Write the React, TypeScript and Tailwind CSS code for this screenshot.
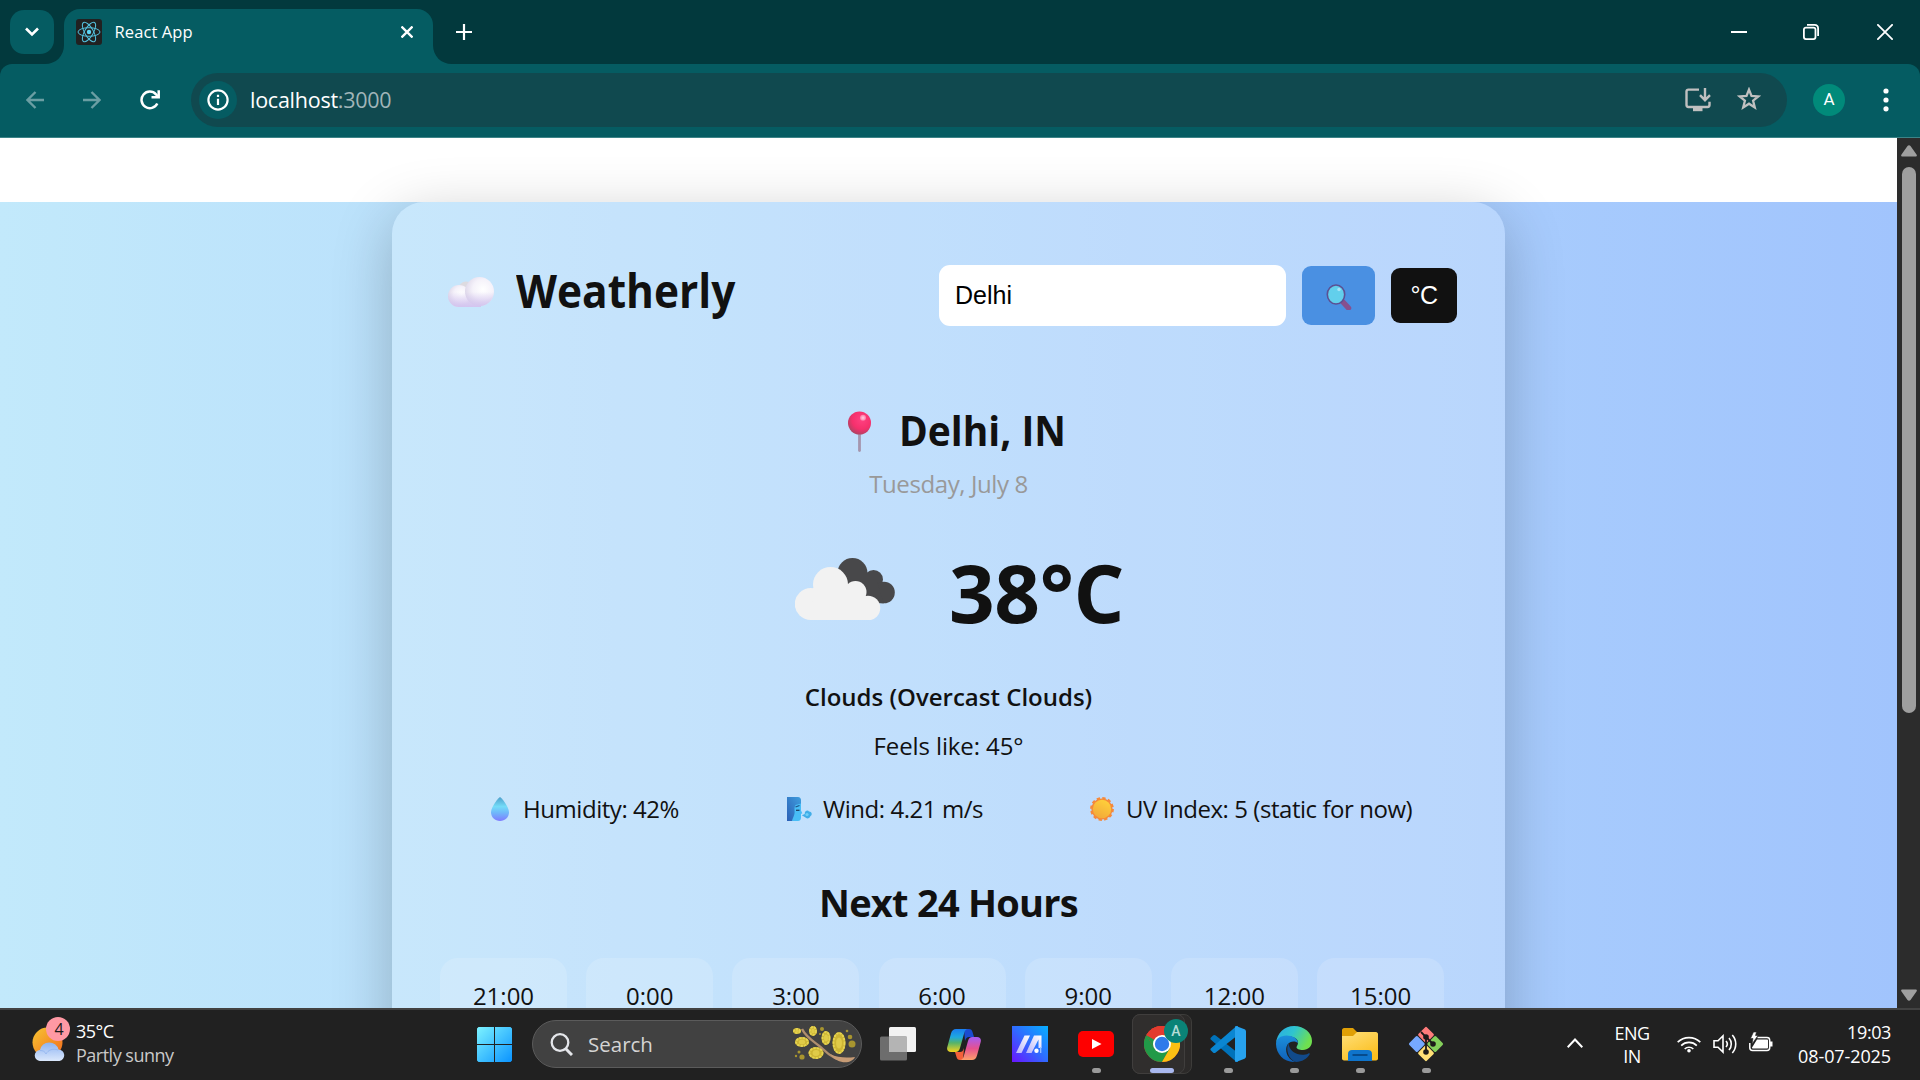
import React from "react";

const hours = ["21:00", "0:00", "3:00", "6:00", "9:00", "12:00", "15:00"];

function ReactLogo() {
  return (
    <svg viewBox="0 0 26 26" className="size-[26px]">
      <rect width="26" height="26" rx="3" fill="#212121" />
      <g fill="none" stroke="#53bfdc" strokeWidth="1">
        <ellipse cx="13" cy="13" rx="11" ry="4.3" />
        <ellipse cx="13" cy="13" rx="11" ry="4.3" transform="rotate(60 13 13)" />
        <ellipse cx="13" cy="13" rx="11" ry="4.3" transform="rotate(120 13 13)" />
      </g>
      <circle cx="13" cy="13" r="2.2" fill="#5fd4f3" />
    </svg>
  );
}

function TabStrip() {
  return (
    <div className="flex h-16 bg-[#02393d]">
      <div className="ml-[10px] mt-[10px] grid size-11 place-items-center rounded-[14px] bg-[#055c62]">
        <svg viewBox="0 0 14 10" className="h-[10px] w-[14px]" fill="none" stroke="#fff" strokeWidth="2.6">
          <path d="M1 1.5 7 7.5 13 1.5" />
        </svg>
      </div>
      <div className="flex w-[10px] items-end justify-end">
        <svg viewBox="0 0 19 19" className="size-[19px] shrink-0" fill="#055c62">
          <path d="M19 0v19H0C11 19 19 11 19 0z" />
        </svg>
      </div>
      <div className="mt-[9px] flex h-[55px] w-[369px] items-center rounded-t-[16px] bg-[#055c62] pb-[9px] pl-3">
        <ReactLogo />
        <span className="ml-[12.5px] text-[16.5px] leading-6 tracking-[0.1px] text-white">React App</span>
        <svg viewBox="0 0 12 12" className="ml-auto mr-[20px] size-3" stroke="#fff" strokeWidth="2.3">
          <path d="M.5.5l11 11M11.5.5l-11 11" />
        </svg>
      </div>
      <div className="flex items-end">
        <svg viewBox="0 0 19 19" className="size-[19px]" fill="#055c62">
          <path d="M0 0v19h19C8 19 0 11 0 0z" />
        </svg>
      </div>
      <svg viewBox="0 0 16 16" className="ml-[4px] mt-6 size-4" stroke="#fff" strokeWidth="2.2">
        <path d="M8 0v16M0 8h16" />
      </svg>
      <div className="ml-auto mr-[27px] flex h-16 items-center gap-[56px]">
        <svg viewBox="0 0 16 16" className="size-4" stroke="#fff" strokeWidth="2">
          <path d="M0 8h16" />
        </svg>
        <svg viewBox="0 0 16 16" className="size-4" fill="none" stroke="#fff" strokeWidth="1.8">
          <rect x=".9" y="3.6" width="11.6" height="11.5" rx="2" />
          <path d="M4 .9h7.5c2.200 0 3.600 1.500 3.600 3.700V12" />
        </svg>
        <svg viewBox="0 0 16 16" className="ml-[2px] size-4" stroke="#fff" strokeWidth="1.8">
          <path d="M.3.3l15.400 15.400M15.700.3L.3 15.700" />
        </svg>
      </div>
    </div>
  );
}

function Toolbar() {
  return (
    <div className="bg-[#02393d]">
      <div className="flex h-[74px] items-start rounded-t-[12px] border-b border-[#3c8488] bg-[#055c62] pt-[9px]">
        <div className="flex h-[54px] w-[191px] items-center pl-[26px]">
          <svg viewBox="0 0 18 18" className="size-[18px]" fill="none" stroke="#6b9ea3" strokeWidth="2.4">
            <path d="M18.500 9H1.500M9.500 1 1.500 9l8 8" />
          </svg>
          <svg viewBox="0 0 18 18" className="ml-[39px] size-[18px]" fill="none" stroke="#6b9ea3" strokeWidth="2.4">
            <path d="M-.5 9h17M8.500 1l8 8-8 8" />
          </svg>
          <svg viewBox="0 0 20 20" className="ml-[39px] size-5" fill="none" stroke="#fff" strokeWidth="2.500">
            <path d="M17.300 13.500A8.300 8.300 0 1 1 16 4.300L18 6.500" />
            <path d="M18.700.2v7.100h-7.200" />
          </svg>
        </div>
        <div className="flex h-[54px] w-[1596px] items-center rounded-full bg-[#10494f] pl-2">
          <div className="grid size-[38px] place-items-center rounded-full bg-[#055c62]">
            <svg viewBox="0 0 22 22" className="size-[22px]" fill="none" stroke="#fff" strokeWidth="2.200">
              <circle cx="11" cy="11" r="9.600" />
              <path d="M11 9.700v6.300M11 5.700v2.200" />
            </svg>
          </div>
          <span className="ml-[13px] text-[21.500px] leading-8 tracking-[-0.25px] text-white">
            localhost<span className="text-[#a0b5b8]">:3000</span>
          </span>
          <svg viewBox="0 0 26 24" className="ml-auto h-6 w-[26px]" fill="none" stroke="#c0c0c0" strokeWidth="2.400">
            <path d="M14 1.600H3.400c-1.200 0-1.900.7-1.900 1.900v13.600c0 1.200.7 1.900 1.900 1.900h19.200c1.200 0 1.900-.7 1.900-1.900v-3.300" />
            <path d="M20 0v11.500M15 7.200l5 5 5-5" />
            <path d="M8 21.300h9.500" strokeWidth="3.800" />
          </svg>
          <svg viewBox="0 0 24 24" className="mb-[2px] ml-[26px] mr-[26px] size-6 shrink-0" fill="none" stroke="#c0c0c0" strokeWidth="2.300">
            <path d="M12 2.600l2.500 6.300 6.800.5-5.200 4.300 1.700 6.700L12 16.700l-5.800 3.700 1.700-6.700-5.200-4.300 6.800-.5z" />
          </svg>
        </div>
        <div className="ml-[26px] mt-[11px] grid size-8 place-items-center rounded-full bg-[#018a7a] font-['Roboto',sans-serif] text-[17px] text-white">
          A
        </div>
        <svg viewBox="0 0 6 24" className="ml-[38px] mt-[15px] h-6 w-[6px]" fill="#fff">
          <circle cx="3" cy="3" r="2.600" />
          <circle cx="3" cy="12" r="2.600" />
          <circle cx="3" cy="20.800" r="2.600" />
        </svg>
      </div>
    </div>
  );
}

function SoftCloud() {
  return (
    <svg viewBox="0 0 46 30" className="mt-[3px] h-[30px] w-[46px]">
      <defs>
        <radialGradient id="sc1" cx="62%" cy="42%" r="70%">
          <stop offset="0" stopColor="#fff" />
          <stop offset=".5" stopColor="#f5f2fa" />
          <stop offset="1" stopColor="#d9d2e6" />
        </radialGradient>
        <linearGradient id="sc2" x1="0" y1="0" x2="0" y2="1">
          <stop offset=".5" stopColor="#d3c4ef" stopOpacity="0" />
          <stop offset="1" stopColor="#d3c4ef" />
        </linearGradient>
        <clipPath id="sc3">
          <circle cx="11" cy="19" r="11" />
          <circle cx="31.500" cy="14.500" r="14.500" />
          <rect x="11" y="15" width="22" height="15" />
        </clipPath>
      </defs>
      <circle cx="18" cy="12" r="7.500" fill="#dddbe0" />
      <rect x="9" y="15" width="23" height="15" fill="#e9e3f4" />
      <circle cx="11" cy="19" r="11" fill="url(#sc1)" />
      <circle cx="31.500" cy="14.500" r="14.500" fill="url(#sc1)" />
      <rect width="46" height="30" fill="url(#sc2)" clipPath="url(#sc3)" />
    </svg>
  );
}

function Magnifier() {
  return (
    <svg viewBox="0 0 26 26" className="mt-[3px] size-[26px]">
      <path d="M16.500 17.500l6 6.500" stroke="#86508f" strokeWidth="5.500" strokeLinecap="round" />
      <ellipse cx="10" cy="10.500" rx="8.700" ry="9.500" fill="#62cfec" stroke="#5c5093" strokeWidth="1.600" />
      <circle cx="13" cy="5.500" r="1.700" fill="#a5e4f8" />
    </svg>
  );
}

function Pin() {
  return (
    <svg viewBox="0 0 23 41" className="mt-[9px] h-[41px] w-[23px]">
      <defs>
        <radialGradient id="pin" cx="60%" cy="35%" r="70%">
          <stop offset="0" stopColor="#ff4181" />
          <stop offset=".6" stopColor="#f5306c" />
          <stop offset="1" stopColor="#a84563" />
        </radialGradient>
        <radialGradient id="shine">
          <stop offset="0" stopColor="#ffd0e2" />
          <stop offset="1" stopColor="#ff7aa8" />
        </radialGradient>
      </defs>
      <path d="M11.500 22v17.500" stroke="#a596ae" strokeWidth="2.800" strokeLinecap="round" />
      <circle cx="11.500" cy="12" r="11.500" fill="url(#pin)" />
      <circle cx="15" cy="6.800" r="3" fill="url(#shine)" />
    </svg>
  );
}

function BrokenClouds() {
  return (
    <svg viewBox="0 0 100 62" className="mb-[6px] h-[62px] w-[100px]">
      <g fill="#48484a">
        <circle cx="57.500" cy="15" r="15" />
        <circle cx="78.500" cy="21.500" r="9.500" />
        <circle cx="89" cy="34.500" r="10.800" />
        <path d="M50 12h18l14 12 7 21.300H55z" />
      </g>
      <g fill="#f2f2f2">
        <circle cx="15.800" cy="46" r="16" />
        <circle cx="35.500" cy="26.500" r="17.500" />
        <circle cx="60.500" cy="34" r="11" />
        <circle cx="73" cy="50" r="12.300" />
        <path d="M15.800 62H73V38H60l-8-8H18z" />
      </g>
    </svg>
  );
}

function Drop() {
  return (
    <svg viewBox="0 0 18 24" className="h-6 w-[18px]">
      <defs>
        <linearGradient id="drop" x1="0" y1="0" x2="0" y2="1">
          <stop offset="0" stopColor="#4d9fcb" />
          <stop offset=".4" stopColor="#74dcf8" />
          <stop offset=".65" stopColor="#6fb9fa" />
          <stop offset="1" stopColor="#7f7bff" />
        </linearGradient>
      </defs>
      <path d="M9 0c.8 0 9 9.500 9 15.300C18 20.500 14 24 9 24s-9-3.500-9-8.700C0 9.500 8.200 0 9 0z" fill="url(#drop)" />
    </svg>
  );
}

function WindFace() {
  return (
    <svg viewBox="0 0 25 24" className="h-6 w-[25px]">
      <defs>
        <linearGradient id="hair" x1="0" y1="1" x2="1" y2="0">
          <stop offset="0" stopColor="#2b5fb5" />
          <stop offset="1" stopColor="#3f9fdf" />
        </linearGradient>
      </defs>
      <path d="M6 6h8v7.500l1.300 2.800-1.300.7v3.500c0 2-1 3.500-3 3.500H5z" fill="#48bdf6" />
      <path d="M0 0h11c2 0 3 1.500 3 3v3.500L8.500 8c-1.700 2.500-.7 5.500-.9 8-.3 3-2 5-2.600 8H0z" fill="url(#hair)" />
      <path d="M8.500 10l4-1.500" stroke="#1d5184" strokeWidth="1.300" />
      <path d="M9 13.300h3.500" stroke="#1d3f64" strokeWidth="1.300" />
      <path d="M14.800 18.200l3-1.200c-.5-3 3-4.500 4.200-2.500 3 0 3.600 3.500 1.400 4.600-.4 2.600-4 3-5.300 1.200z" fill="#41aee8" />
      <circle cx="20" cy="17.500" r="1.600" fill="#6fd0f7" />
    </svg>
  );
}

function Sun() {
  return (
    <svg viewBox="0 0 24 24" className="size-6">
      <defs>
        <linearGradient id="sun" x1=".8" y1="0" x2=".3" y2="1">
          <stop offset="0" stopColor="#ffd23a" />
          <stop offset="1" stopColor="#f2a93a" />
        </linearGradient>
      </defs>
      <circle cx="12" cy="12" r="10.600" fill="#f5893a" />
      <circle cx="12" cy="12" r="10.700" fill="none" stroke="#f5893a" strokeWidth="2.400" strokeDasharray="3.300 2.300" />
      <circle cx="12" cy="12" r="9.200" fill="url(#sun)" />
    </svg>
  );
}

function WeatherPage() {
  return (
    <div className="flex h-[870px]">
      <div className="h-[870px] w-[1897px] overflow-hidden bg-white">
        <div className="h-16 bg-white" />
        <div className="flex h-[1200px] justify-start bg-linear-to-r from-[#c2e9fb] to-[#a1c4fd] pl-[392px]">
          <main className="w-[1113px] rounded-[32px] bg-white/20 text-[#111] shadow-[0_15px_60px_rgba(0,0,0,0.23)]">
            <header className="mt-[63px] flex h-[61px] items-center pl-[56px]">
              <div className="flex items-center pb-[11px]">
                <SoftCloud />
                <h1 className="ml-[22px] w-[422px] origin-left scale-x-[0.912] text-[46.500px] font-bold leading-[60px]">
                  Weatherly
                </h1>
              </div>
              <input
                readOnly
                value="Delhi"
                className="ml-[1px] h-[61px] w-[347px] rounded-[11px] bg-white px-4 font-['Liberation_Sans',sans-serif] text-[25px] text-black outline-none"
              />
              <button className="ml-4 grid h-[59px] w-[73px] place-items-center rounded-[9px] bg-[#4a90e2]">
                <Magnifier />
              </button>
              <button className="ml-4 h-[55px] w-[66px] rounded-[9px] bg-[#111] font-['Liberation_Sans',sans-serif] text-[25px] tracking-[-0.5px] text-white">
                °C
              </button>
            </header>
            <h2 className="mt-[76px] flex h-14 items-start pl-[456px] text-[41px] font-bold leading-[57px]">
              <Pin />
              <span className="ml-[28px] origin-left scale-x-[0.95]">Delhi, IN</span>
            </h2>
            <p className="mt-[9px] text-center text-[24px] leading-[33px] tracking-[-0.4px] text-[#999]">Tuesday, July 8</p>
            <div className="mt-[42px] flex h-[100px] items-center pl-[403px]">
              <BrokenClouds />
              <span className="ml-[54px] text-[80px] font-bold leading-[100px] tracking-[-0.4px]">38°C</span>
            </div>
            <p className="mt-[39px] text-center text-[24px] font-semibold leading-8">Clouds (Overcast Clouds)</p>
            <p className="mt-[17px] text-center text-[24px] leading-8 tracking-[-0.1px]">Feels like: 45°</p>
            <div className="mt-[31px] flex h-8 pl-[99px] text-[24px] leading-8 tracking-[-0.45px]">
              <div className="flex w-[296px] items-center gap-[14px]">
                <Drop />
                Humidity: 42%
              </div>
              <div className="flex w-[303px] items-center gap-[11px]">
                <WindFace />
                Wind: 4.21 m/s
              </div>
              <div className="flex items-center gap-[12px]">
                <Sun />
                UV Index: 5 (static for now)
              </div>
            </div>
            <h3 className="mt-[51px] text-center text-[38px] font-bold leading-[52px] tracking-[-0.75px]">Next 24 Hours</h3>
            <div className="mt-[30px] flex gap-[19.200px] pl-[48px]">
              {hours.map((h) => (
                <div
                  key={h}
                  className="h-[220px] w-[127px] shrink-0 rounded-[18px] bg-white/15 pt-[26px] text-center text-[24px] leading-[23px]"
                >
                  {h}
                </div>
              ))}
            </div>
          </main>
        </div>
      </div>
      <div className="flex w-[23px] flex-col items-center bg-[#2c2c2c] pt-[7px]">
        <svg viewBox="0 0 16 12" className="h-3 w-4" fill="#9f9f9f">
          <path d="M6.500 1c.8-1.100 2.200-1.100 3 0l6 8.500c.8 1.100.2 2-1 2h-13c-1.200 0-1.800-.9-1-2z" />
        </svg>
        <div className="mt-[10px] h-[546px] w-[14px] rounded-full bg-[#9f9f9f]" />
        <svg viewBox="0 0 16 12" className="mt-auto mb-[7px] h-3 w-4 rotate-180" fill="#9f9f9f">
          <path d="M6.500 1c.8-1.100 2.200-1.100 3 0l6 8.500c.8 1.100.2 2-1 2h-13c-1.200 0-1.800-.9-1-2z" />
        </svg>
      </div>
    </div>
  );
}

function PartlySunny() {
  return (
    <svg viewBox="0 0 34 34" className="mt-[10px] size-[34px]">
      <defs>
        <linearGradient id="ps" x1="0" y1="0" x2="1" y2="1">
          <stop offset="0" stopColor="#f7c531" />
          <stop offset="1" stopColor="#f2691d" />
        </linearGradient>
        <linearGradient id="pc" x1="0" y1="0" x2="0" y2="1">
          <stop offset="0" stopColor="#8db3f2" />
          <stop offset="1" stopColor="#dbe8fc" />
        </linearGradient>
      </defs>
      <circle cx="15.500" cy="15.500" r="15" fill="url(#ps)" />
      <path d="M8.500 34A5.500 5.500 0 0 1 8 23a9.500 9.500 0 0 1 18.500-.5A5.800 5.800 0 0 1 27.500 34z" fill="url(#pc)" />
      <path d="M8 23.500c3 0 5 1 6 3.500 2-4 7-6 12-4" fill="none" stroke="#7ba4e8" strokeWidth=".8" opacity=".6" />
    </svg>
  );
}

function Mimosa() {
  const blobs: [number, number, number, number][] = [
    [4, 5, 4, 3], [20, 5, 4, 5], [9, 16, 7, 5], [33, 12, 4.5, 7], [23, 27, 7.500, 6], [46, 17, 6.500, 11],
  ];
  const dots: [number, number, number][] = [
    [59, 18, 3.500], [57, 11, 2.300], [54, 5, 1.300], [29, 3, 2], [9, 31, 2.600], [6, 26, 1.500], [3, 30, 1.200], [27, 8, 1],
  ];
  return (
    <svg viewBox="0 0 63 37" className="h-[37px] w-[63px]">
      <path d="M9 3c5 10 15 14 22 21 6 6 12 10 20 10" fill="none" stroke="#b08e6e" strokeWidth="2.400" />
      <path d="M37 28c8 4 17 4 25 3-3 7-17 8-25-3z" fill="#c69b75" />
      {blobs.map(([x, y, a, b], i) => (
        <g key={i}>
          <ellipse cx={x} cy={y} rx={a} ry={b} fill="#cdb534" />
          <ellipse cx={x} cy={y} rx={a - 1} ry={b - 1} fill="none" stroke="#e6d452" strokeWidth="1.800" strokeDasharray="2.400 1" />
          <ellipse cx={x} cy={y} rx={a / 2.200} ry={b / 2} fill="#e0cb48" />
        </g>
      ))}
      {dots.map(([x, y, r], i) => (
        <circle key={i} cx={x} cy={y} r={r} fill="#a8952f" />
      ))}
    </svg>
  );
}

function Copilot() {
  return (
    <svg viewBox="0 0 34 31" className="h-[31px] w-[34px]">
      <defs>
        <linearGradient id="cp1" x1="0" y1="0" x2="0" y2="1">
          <stop offset="0" stopColor="#1a7df0" />
          <stop offset=".35" stopColor="#1ea8e0" />
          <stop offset=".6" stopColor="#55b36a" />
          <stop offset="1" stopColor="#f6d21c" />
        </linearGradient>
        <linearGradient id="cp2" x1="0" y1="0" x2="0" y2="1">
          <stop offset="0" stopColor="#a45cf5" />
          <stop offset=".5" stopColor="#e6518f" />
          <stop offset="1" stopColor="#fda06a" />
        </linearGradient>
      </defs>
      <path d="M17 0h5c2 0 3 1 3.500 3l1.500 5h-5c-2 0-3 1-4 4z" fill="#1b4bd0" />
      <path d="M16 31h-3c-2 0-3-1-3.500-3L8 23h5c2 0 3-1 4-4z" fill="#f4603a" />
      <path d="M9 0h12c-2 0-3 1.500-3.500 3L13 19c-.8 2.500-2 4-4.500 4H4c-3 0-4.500-2-3.700-5L4 4.500C4.800 1.500 6.500 0 9 0z" fill="url(#cp1)" />
      <path d="M25 31H13c2 0 3-1.500 3.500-3L21 12c.8-2.500 2-4 4.500-4H30c3 0 4.500 2 3.700 5L30 26.500c-.8 3-2.500 4.500-5 4.500z" fill="url(#cp2)" />
    </svg>
  );
}

function MaLogo() {
  return (
    <svg viewBox="0 0 36 36" className="size-9">
      <defs>
        <linearGradient id="ma" x1="0" y1="1" x2="1" y2="0">
          <stop offset="0" stopColor="#6a14ff" />
          <stop offset=".5" stopColor="#2f6bff" />
          <stop offset="1" stopColor="#06b0ff" />
        </linearGradient>
        <linearGradient id="mb" x1="1" y1="0" x2="0" y2="1">
          <stop offset="0" stopColor="#fff" />
          <stop offset="1" stopColor="#b7b4fb" />
        </linearGradient>
      </defs>
      <rect width="36" height="36" fill="url(#ma)" />
      <path d="M12.500 9.500H18L9.500 27H4z" fill="url(#mb)" />
      <path d="M22 9.500h7.500V22H26.500v-8.500L19.500 27H14z" fill="url(#mb)" />
      <circle cx="24.500" cy="24.800" r="2.200" fill="#fff" />
      <path d="M28.700 21v6" stroke="#9cc4ff" strokeWidth="1.300" />
    </svg>
  );
}

function ChromeLogo() {
  return (
    <svg viewBox="0 0 36 36" className="size-9">
      <circle cx="18" cy="18" r="18" fill="#e33b2e" />
      <path d="M2.400 9A18 18 0 0 0 18 36l8-13.400L18 18l-7.800 4.500z" fill="#219a48" />
      <path d="M18 36A18 18 0 0 0 33.600 9H18v9l7.800 4.500z" fill="#fcc013" />
      <path d="M2.400 9A18 18 0 0 1 33.600 9H18v9z" fill="#e33b2e" />
      <path d="M2.400 9l7.800 13.500L18 18z" fill="#219a48" />
      <path d="M2.400 9A18 18 0 0 1 18 0v9l-8 4.500z" fill="#e33b2e" />
      <circle cx="18" cy="18" r="9" fill="#fff" />
      <circle cx="18" cy="18" r="7.200" fill="#2f7bea" />
    </svg>
  );
}

function VsCode() {
  return (
    <svg viewBox="0 0 36 36" className="size-9">
      <path d="M1 11.500l2-2c.8-.8 1.800-.8 2.700-.1L28 27v9h-1.500L1 13.800c-.8-.8-.8-1.600 0-2.300z" fill="#0072ba" />
      <path d="M1 24.500l2 2c.8.8 1.800.8 2.700.1L28 9V0h-1.500L1 22.200c-.8.8-.8 1.600 0 2.300z" fill="#0a86d2" />
      <path d="M26 0l8.500 3.300c.9.400 1.500 1.200 1.500 2.200v25c0 1-.6 1.800-1.500 2.200L26 36c-1-.4-1-1-1-1.600V1.600C25 1 25 .4 26 0z" fill="#27a2ee" />
    </svg>
  );
}

function EdgeLogo() {
  return (
    <svg viewBox="0 0 36 36" className="size-9">
      <defs>
        <linearGradient id="e1" x1="0" y1="0" x2="1" y2=".4">
          <stop offset="0" stopColor="#2aa9e6" />
          <stop offset=".5" stopColor="#2fc4cf" />
          <stop offset="1" stopColor="#6fe04f" />
        </linearGradient>
        <linearGradient id="e2" x1="0" y1="0" x2="0" y2="1">
          <stop offset="0" stopColor="#1c8fdc" />
          <stop offset="1" stopColor="#0f5fb8" />
        </linearGradient>
      </defs>
      <path d="M0 17C1 7 8.500 0 18 0c10.500 0 18 7 18 15 0 5.500-4 9-9 9-4 0-6.500-1.300-6.500-2.800 0-1 1.500-1.700 1.500-4.700 0-3.500-4-6-9-6C6 10.500 1 14 0 17z" fill="url(#e1)" />
      <path d="M0 18c0-5 4.500-8.500 10.500-8.500 6 0 11.500 3 11.500 7.500-2-2-8-2.500-10.500 1.500-3.500 6 0 15 8 17.400C9 37 0 28.500 0 18z" fill="url(#e2)" />
      <path d="M12.500 17c-3 6-.5 16.500 7.500 18.900 6 0 11-3 13.600-7.400.5-1-.3-1.600-1.200-1.100C25 31.300 13 27 12.500 17z" fill="#114a8b" />
    </svg>
  );
}

function Explorer() {
  return (
    <svg viewBox="0 0 36 33" className="h-[33px] w-9">
      <defs>
        <linearGradient id="fx" x1="0" y1="0" x2=".6" y2="1">
          <stop offset="0" stopColor="#ffe07a" />
          <stop offset="1" stopColor="#fbbf20" />
        </linearGradient>
      </defs>
      <path d="M0 2C0 1 1 0 2 0h9l4 4v8H0z" fill="#e0a006" />
      <path d="M0 8h11l4-4h19c1 0 2 1 2 2v24.500c0 1-1 2-2 2H2c-1 0-2-1-2-2z" fill="url(#fx)" />
      <path d="M6 33v-7c0-2.500 1.500-4 4-4h16c2.500 0 4 1.500 4 4v7z" fill="#0f74cb" />
      <path d="M10.500 27h15" stroke="#064b8c" strokeWidth="2" />
    </svg>
  );
}

function GitLogo() {
  return (
    <svg viewBox="0 0 36 36" className="size-9">
      <g transform="rotate(45 18 18)">
        <rect x="5.500" y="5.500" width="12" height="12" rx="1.500" fill="#ff7b7b" />
        <rect x="18.500" y="5.500" width="12" height="12" rx="1.500" fill="#84cf5b" />
        <rect x="5.500" y="18.500" width="12" height="12" rx="1.500" fill="#76a9ff" />
        <rect x="18.500" y="18.500" width="12" height="12" rx="1.500" fill="#ffdf76" />
      </g>
      <path d="M13 6l5 5v15M18 11l7 7" fill="none" stroke="#1d1a1a" strokeWidth="1.800" />
      <circle cx="18" cy="11" r="2.800" fill="#1d1a1a" />
      <circle cx="25" cy="18" r="2.800" fill="#1d1a1a" />
      <circle cx="18" cy="26" r="2.800" fill="#1d1a1a" />
    </svg>
  );
}

function TaskIcon({ children, running }: { children: React.ReactNode; running?: boolean }) {
  return (
    <div className="flex h-[70px] w-[66px] shrink-0 flex-col items-center">
      <div className="grid h-[58px] place-items-center pt-[10px]">{children}</div>
      {running && <div className="h-[5px] w-[9px] rounded-full bg-[#9a9a9a]" />}
    </div>
  );
}

function Taskbar() {
  return (
    <div className="flex h-[72px] border-t-2 border-[#424242] bg-[#212121] text-white">
      <div className="relative flex w-[477px] pl-[32px] pt-[7px]">
        <PartlySunny />
        <div className="absolute left-[46px] top-[7px] grid size-6 place-items-center rounded-full bg-[#ff99a4] pl-0.5 text-[16px] leading-none text-[#1a1a1a]">
          4
        </div>
        <div className="ml-[10px] mt-[2px] text-[18px] leading-6">
          <div className="tracking-[-0.5px]">35°C</div>
          <div className="tracking-[-0.5px] text-[#c9c9c9]">Partly sunny</div>
        </div>
      </div>
      <svg viewBox="0 0 35 35" className="mt-[17px] size-[35px]">
        <defs>
          <linearGradient id="win" x1="0" y1="0" x2="1" y2="1">
            <stop offset="0" stopColor="#7df3ff" />
            <stop offset="1" stopColor="#0a93ff" />
          </linearGradient>
        </defs>
        <path d="M1.500 0H17v17H0V1.500zM18 0h15.500L35 1.500V17H18zM0 18h17v17H1.500L0 33.500zM18 18h17v15.500L33.500 35H18z" fill="url(#win)" />
      </svg>
      <div className="ml-[20px] mt-[10px] flex h-12 w-[330px] items-center rounded-full border border-[#5b5b5b] bg-[#414141] pl-[17px] pr-[5px]">
        <svg viewBox="0 0 23 23" className="size-[23px]" fill="none" stroke="#e4e6ea" strokeWidth="2.300">
          <circle cx="10" cy="9.500" r="8.300" />
          <path d="M15.500 15.500l6.500 6.500" strokeWidth="3" />
        </svg>
        <span className="ml-[15px] text-[20.500px] leading-7 text-[#d4d4d4]">Search</span>
        <div className="ml-auto">
          <Mimosa />
        </div>
      </div>
      <svg viewBox="0 0 36 34" className="ml-[18px] mt-[17px] h-[34px] w-9">
        <rect x="9" width="27" height="25" rx="1.500" fill="#f2f2f2" />
        <rect y="9.500" width="27" height="24" rx="1.500" fill="#6d6d6d" />
        <path d="M9 9.500h18V25H9z" fill="#b4b4b4" />
      </svg>
      <div className="ml-[15px] flex">
        <TaskIcon>
          <Copilot />
        </TaskIcon>
        <TaskIcon>
          <MaLogo />
        </TaskIcon>
        <TaskIcon running>
          <svg viewBox="0 0 36 26" className="h-[26px] w-9">
            <rect width="36" height="26" rx="5" fill="#fe0000" />
            <path d="M14 8l9.500 5-9.500 5z" fill="#fff" />
          </svg>
        </TaskIcon>
        <div className="relative flex h-[70px] w-[66px] flex-col items-center">
          <div className="absolute left-[3px] top-1 h-[60px] w-[60px] rounded-[8px] border border-[#3d3c3a] bg-[#2c2a29]" />
          <div className="absolute left-[3px] top-1 h-[60px] w-[53px] rounded-[8px] border border-[#403e3d] bg-[#302e2d]" />
          <div className="relative grid h-[58px] place-items-center pt-[10px]">
            <ChromeLogo />
          </div>
          <div className="relative h-[5px] w-6 rounded-full bg-[#a9b8ef]" />
          <div className="absolute left-[35px] top-[9px] grid size-6 place-items-center rounded-full bg-[#0a8377] font-['Roboto',sans-serif] text-[14px] leading-none font-medium text-[#b4dcd8]">
            A
          </div>
        </div>
        <TaskIcon running>
          <VsCode />
        </TaskIcon>
        <TaskIcon running>
          <EdgeLogo />
        </TaskIcon>
        <TaskIcon running>
          <Explorer />
        </TaskIcon>
        <TaskIcon running>
          <GitLogo />
        </TaskIcon>
      </div>
      <div className="ml-auto flex pr-[29px] text-[18px] leading-6">
        <svg viewBox="0 0 16 10" className="mt-[28px] h-[10px] w-4" fill="none" stroke="#fff" strokeWidth="2">
          <path d="M.7 9.200 8 1.500l7.300 7.700" />
        </svg>
        <div className="ml-[30px] mt-[12px] w-[38px] text-center leading-[23px]">
          <div className="tracking-[-0.5px]">ENG</div>
          <div className="tracking-[-0.5px]">IN</div>
        </div>
        <svg viewBox="0 0 24 18" className="ml-[26px] mt-[25px] h-[18px] w-6" fill="none" stroke="#fff" strokeWidth="1.700">
          <path d="M.7 7.200a16 16 0 0 1 22.600 0M4.200 10.700a11 11 0 0 1 15.600 0M7.700 14a6.200 6.200 0 0 1 8.600 0" />
          <circle cx="12" cy="15.700" r="1.800" fill="#fff" stroke="none" />
        </svg>
        <svg viewBox="0 0 24 20" className="ml-3 mt-[24px] h-5 w-6" fill="none" stroke="#fff" strokeWidth="1.600">
          <path d="M1 6.800h4L10 2v16l-5-4.800H1z" />
          <path d="M13 7a4.500 4.500 0 0 1 0 6M16 4a9 9 0 0 1 0 12M19.300 1a13.500 13.500 0 0 1 0 18" />
        </svg>
        <svg viewBox="0 0 24 20" className="ml-3 mt-[22px] h-5 w-6" fill="none" stroke="#fff" strokeWidth="1.500">
          <path d="M8.500 5.500H18c1.700 0 2.700 1 2.700 2.700v7.600c0 1.700-1 2.700-2.700 2.700H3.500C1.800 18.500.8 17.500.8 15.800V11" />
          <path d="M8 7.500h10c.6 0 1 .3 1 1v7c0 .7-.4 1-1 1H4c-.6 0-1-.3-1-1l1-1.500z" fill="#fff" stroke="none" />
          <path d="M21 9.500h2.500v5H21z" fill="#fff" stroke="none" />
          <path d="M4.500 0h3L6.500 3.500H9L3 12l1-5.500H1.500z" fill="#fff" stroke="#212121" strokeWidth=".6" />
        </svg>
        <div className="ml-[20px] mt-[10px] w-[98px] text-right leading-6">
          <div className="tracking-[-0.4px]">19:03</div>
          <div className="tracking-[-0.1px]">08-07-2025</div>
        </div>
      </div>
    </div>
  );
}

export default function App() {
  return (
    <div className="h-[1080px] w-[1920px] overflow-hidden font-['Open_Sans','Noto_Sans',sans-serif]">
      <TabStrip />
      <Toolbar />
      <WeatherPage />
      <Taskbar />
    </div>
  );
}
